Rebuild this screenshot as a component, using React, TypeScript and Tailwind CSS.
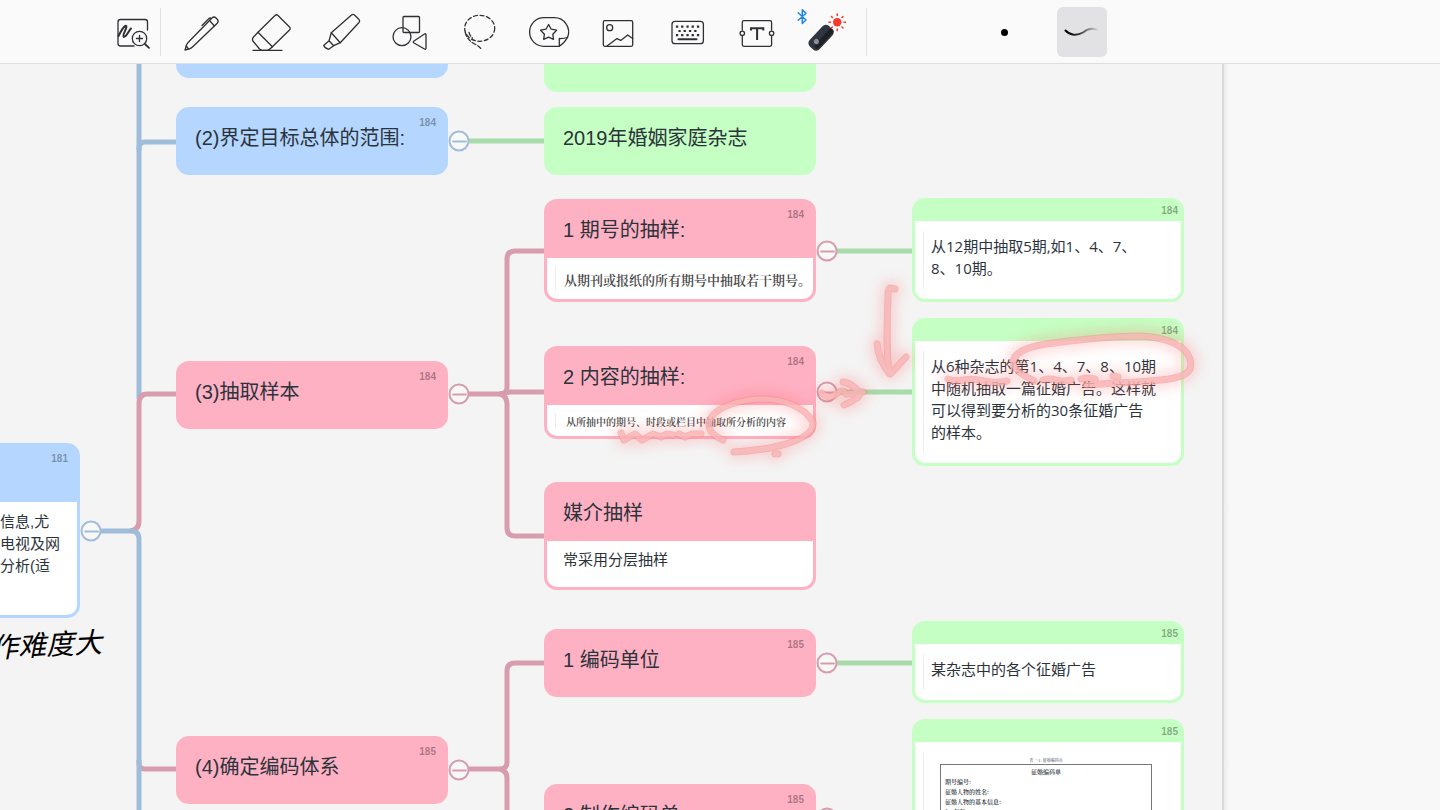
import { ReactNode } from 'react'
import { Minus } from 'lucide-react'
import clsx from 'clsx'

type Tone = 'blue' | 'pink' | 'green'

interface MapNode {
  x: number
  y: number
  w?: number
  h: number
  tone: Tone
  title?: string
  page?: number
  lines?: string[]
  kind?: 'plain' | 'quote' | 'scan' | 'form'
  scanSize?: string
  cut?: boolean
}

const TONES: { [key in Tone]: { card: string; line: string; text: string } } = {
  blue: { card: 'bg-[#b5d7ff] border-[#b5d7ff]', line: '#9fbcdb', text: 'text-[#9fbcdb] border-[#9fbcdb]' },
  pink: { card: 'bg-[#ffb1c4] border-[#ffb1c4]', line: '#d79cad', text: 'text-[#d79cad] border-[#d79cad]' },
  green: { card: 'bg-[#c5ffc3] border-[#c5ffc3]', line: '#a8dbaa', text: 'text-[#a8dbaa] border-[#a8dbaa]' }
}

// y is measured from the top of the board
const NODES: MapNode[] = [
  { x: 0, y: 379, w: 80, h: 175, tone: 'blue', title: '', page: 181, lines: ['信息,尤', '电视及网', '分析(适'], kind: 'plain', cut: true },
  { x: 176, y: -54, h: 68, tone: 'blue', title: '' },
  { x: 176, y: 43, h: 68, tone: 'blue', title: '(2)界定目标总体的范围:', page: 184 },
  { x: 176, y: 297, h: 68, tone: 'pink', title: '(3)抽取样本', page: 184 },
  { x: 176, y: 672, h: 68, tone: 'pink', title: '(4)确定编码体系', page: 185 },
  { x: 544, y: -40, h: 68, tone: 'green', title: '' },
  { x: 544, y: 43, h: 68, tone: 'green', title: '2019年婚姻家庭杂志' },
  { x: 544, y: 135, h: 103, tone: 'pink', title: '1 期号的抽样:', page: 184, lines: ['从期刊或报纸的所有期号中抽取若干期号。'], kind: 'scan', scanSize: 'text-[13px] pl-2 pt-[6px]' },
  { x: 544, y: 282, h: 93, tone: 'pink', title: '2 内容的抽样:', page: 184, lines: ['从所抽中的期号、时段或栏目中抽取所分析的内容'], kind: 'scan', scanSize: 'text-[10px] pl-[10px] pt-px' },
  { x: 544, y: 418, h: 108, tone: 'pink', title: '媒介抽样', lines: ['常采用分层抽样'], kind: 'plain' },
  { x: 544, y: 565, h: 68, tone: 'pink', title: '1 编码单位', page: 185 },
  { x: 544, y: 720, h: 68, tone: 'pink', title: '2 制作编码单', page: 185 },
  { x: 912, y: 134, h: 104, tone: 'green', page: 184, lines: ['从12期中抽取5期,如1、4、7、', '8、10期。'], kind: 'quote' },
  { x: 912, y: 254, h: 148, tone: 'green', page: 184, lines: ['从6种杂志的第1、4、7、8、10期', '中随机抽取一篇征婚广告。这样就', '可以得到要分析的30条征婚广告', '的样本。'], kind: 'quote' },
  { x: 912, y: 557, h: 82, tone: 'green', page: 185, lines: ['某杂志中的各个征婚广告'], kind: 'quote' },
  { x: 912, y: 655, h: 160, tone: 'green', page: 185, lines: ['期号编号:', '征婚人物的姓名:', '征婚人物的基本信息:', '1、年龄:'], kind: 'form' }
]

const TOGGLES: { x: number; y: number; tone: Tone }[] = [
  { x: 91, y: 467, tone: 'blue' },
  { x: 459, y: 77, tone: 'blue' },
  { x: 459, y: 330, tone: 'pink' },
  { x: 459, y: 706, tone: 'pink' },
  { x: 827, y: 187, tone: 'pink' },
  { x: 827, y: 328, tone: 'pink' },
  { x: 827, y: 599, tone: 'pink' },
  { x: 827, y: 754, tone: 'pink' }
]

const LINKS: { d: string; tone: Tone }[] = [
  { d: 'M139 696 V699 Q139 705 145 705 H176', tone: 'pink' },
  { d: 'M139 0 V335', tone: 'blue' },
  { d: 'M139 86 V84 Q139 78 145 78 H176', tone: 'blue' },
  { d: 'M130 467 Q139 466 139 457 V340 Q139 330 147 330 H176', tone: 'pink' },
  { d: 'M101 467 H131 Q139 467 139 475 V746', tone: 'blue' },
  { d: 'M469 77 H544', tone: 'green' },
  { d: 'M469 330 H500 Q507 330 507 323 V195 Q507 187 515 187 H544', tone: 'pink' },
  { d: 'M500 330 L510 328 H544', tone: 'pink' },
  { d: 'M500 330 Q507 332 507 340 V464 Q507 472 515 472 H544', tone: 'pink' },
  { d: 'M469 705 H500 Q507 705 507 698 V607 Q507 599 515 599 H544', tone: 'pink' },
  { d: 'M500 705 Q507 707 507 714 V760', tone: 'pink' },
  { d: 'M837 187 H912', tone: 'green' },
  { d: 'M837 328 H912', tone: 'green' },
  { d: 'M837 599 H912', tone: 'green' }
]

const LASER_STROKES = [
  'M895 225 L890 224 Q888 224 888 232 C887 260 886 285 889 309',
  'M877 280 C878 292 884 303 890 310 C895 306 900 299 906 293',
  'M1034 317 C1022 311 1012 304 1013 297 C1016 285 1036 281 1054 279 C1085 275 1120 272 1140 272 C1164 273 1185 280 1190 295 C1193 306 1188 311 1174 314 C1150 319 1115 318 1086 321',
  'M948 315 Q956 318 964 316 T984 317 T1007 317',
  'M1043 316 Q1050 314 1056 316 T1071 316',
  'M1081 315 Q1088 313 1095 315',
  'M1113 312 L1118 313',
  'M822 329 Q829 336 836 330 T846 330 L863 328',
  'M843 318 Q850 319 855 324 Q863 329 857 334 Q850 339 844 341',
  'M723 376 C712 371 708 366 709 359 C712 344 735 337 758 335 C785 334 805 344 813 358 C815 371 793 379 770 384 Q750 387 734 388',
  'M775 390 L778 390',
  'M621 369 L624 376 L635 370 L642 376 L653 370 L661 373 L667 370 L673 371',
  'M679 370 L685 373 L692 370 L701 370'
]

function Icon({ children, label }: { children: ReactNode; label: string }) {
  return (
    <button type="button" aria-label={label} className="h-12 w-12 shrink-0">
      <svg
        width="48"
        height="48"
        viewBox="0 0 48 48"
        fill="none"
        stroke="#303034"
        strokeWidth="1.3"
        strokeLinecap="round"
        strokeLinejoin="round"
        className="overflow-visible"
      >
        {children}
      </svg>
    </button>
  )
}

function Toolbar() {
  return (
    <header className="flex h-[65px] shrink-0 items-center border-b-2 border-[#dededf] bg-[#fafafa] pt-px pl-[109px]">
      <Icon label="Zoom writing">
        <path d="M38.5 22 V14 Q38.5 11.5 36 11.5 H11.5 Q9 11.5 9 14 V35.5 Q9 38 11.5 38 H25" />
        <path d="M9.5 28 C12.5 22 16 16.5 17.3 18 C18.5 20 12.5 27.5 14.8 29 C17.5 29 19.5 23 22 20.5" strokeWidth="2" />
        <circle cx="30.5" cy="30.5" r="7.2" />
        <path d="M36 36 L40 39.8" strokeWidth="1.8" />
        <path d="M27.5 30.5 H33.5 M30.5 27.5 V33.5" />
      </Icon>
      <div className="ml-[3px] h-12 w-px bg-[#e0e0e0]" />
      <div className="ml-[17px] flex w-[672px] shrink-0 justify-between">
        <Icon label="Pen">
          <path d="M7 42 L8.5 37 Q9.5 35 11 33.5 L34 10 Q36 8 38 10 L39.5 11.5 Q41 13.5 39 15.5 L15 38.5 Q13.5 40 11.5 40.8 Z" />
          <path d="M31.5 12.5 L36.5 18 M24 17.5 L31 10.5 Q32 9.5 33.2 10.6 M8.2 38 L10.5 41" />
        </Icon>
        <Icon label="Eraser">
          <path d="M11 24.3 L28 7.5 Q29.4 6 31 7.5 L42.5 19 Q44 20.5 42.5 22 L25.4 38.7 Z" />
          <path d="M11 24.3 L6.5 29 Q4.5 31.3 6.3 33.5 L12.5 41 Q14 42.3 15.5 42.3 H20 Q21.5 42.3 25.4 38.7" />
          <path d="M6 42.3 H35" />
        </Icon>
        <Icon label="Highlighter">
          <path d="M14.3 24.7 L34.5 7 Q36 5.7 37.5 7 L42 11.5 Q43.3 13 42 14.5 L23.3 34.7 Z" />
          <path d="M14.3 24.7 L12 32.7 L16.7 37.7 L23.3 34.7 M12 32.7 L6.7 37.5 Q8 40.5 11.7 41.3 L16.7 37.7" />
        </Icon>
        <Icon label="Shapes">
          <rect x="17" y="8.5" width="16.5" height="16" rx="1" />
          <circle cx="16" cy="28.7" r="9" />
          <path d="M28 33 L38.5 26 Q40 25.2 40 27 V40 Q40 42 38.5 41 L28 35 Q26.5 34 28 33 Z" />
        </Icon>
        <Icon label="Lasso">
          <ellipse cx="24.7" cy="20.3" rx="15" ry="13" strokeDasharray="4 2.6" />
          <path d="M10.3 24.5 Q12 32 19.7 36 Q24 38 26.4 41.3 M14 24.3 Q15 28 17.5 30" strokeDasharray="4 2.2" />
        </Icon>
        <Icon label="Sticker">
          <path d="M34.3 38.3 H18.9 A14.3 14.3 0 0 1 18.9 9.7 H28.7 A14.3 14.3 0 0 1 42.5 29.5 Q39 35.5 34.3 38.3 Z" />
          <path d="M34.3 38.3 V30.5 Q38 30.8 42.5 29.5" />
          <path d="M23.6 16.5 L26.2 21.2 L31.6 22.2 L27.8 26.2 L28.5 31.4 L23.6 29.2 L18.7 31.4 L19.4 26.2 L15.6 22.2 L21 21.2 Z" />
        </Icon>
        <Icon label="Image">
          <rect x="9.3" y="12.7" width="29.4" height="25.6" rx="1.5" />
          <circle cx="15.7" cy="19.7" r="3" />
          <path d="M13 38 L23 30.6 L26.7 32.4 L33.7 27 L38.7 30.5" />
        </Icon>
        <Icon label="Keyboard">
          <rect x="9" y="13.3" width="31.4" height="22.4" rx="3" />
          <path
            d="M14 18.7 h.1 M19.2 18.7 h.1 M24.5 18.7 h.1 M29.7 18.7 h.1 M35 18.7 h.1 M16.5 23 h.1 M21.7 23 h.1 M27 23 h.1 M32.3 23 h.1 M14 27.2 h.1 M19.2 27.2 h.1 M24.5 27.2 h.1 M29.7 27.2 h.1 M35 27.2 h.1"
            strokeWidth="2.2"
            strokeLinecap="square"
          />
          <path d="M15.5 31.2 H33.5" strokeWidth="2" />
        </Icon>
        <Icon label="Text">
          <path d="M9.3 22 V14.5 Q9.3 12.7 11 12.7 H37 Q38.6 12.7 38.6 14.5 V22 M9.3 28.5 V36.5 Q9.3 38.3 11 38.3 H37 Q38.6 38.3 38.6 36.5 V28.5" />
          <circle cx="9.3" cy="25.3" r="2.2" />
          <circle cx="38.6" cy="25.3" r="2.2" />
          <path d="M18 22.5 V20.3 H30.3 V22.5 M24.1 20.3 V32" strokeWidth="2" strokeLinecap="butt" strokeLinejoin="miter" />
        </Icon>
        <Icon label="Laser pointer">
          <path d="M-3.8 4.8 L4 12 L0.3 15.5 V1.8 L4 5.2 L-3.8 12.2" stroke="#1e88e5" strokeWidth="1.5" />
          <g transform="rotate(-47 19 29.7)" stroke="none">
            <rect x="5" y="23" width="28" height="13.5" rx="4.5" fill="#30363f" />
            <rect x="8" y="30" width="25" height="5" rx="2" fill="#1d2127" />
            <circle cx="13" cy="29" r="2.6" fill="#8b8f94" />
          </g>
          <circle cx="35.2" cy="14.3" r="4.2" fill="#f8382c" stroke="none" />
          <path
            d="M35.2 6 v1.5 M35.2 21 v1.5 M27 14.3 h1.5 M42 14.3 h1.5 M29.4 8.5 l1 1 M40 19 l1 1 M29.4 20 l1 -1 M40 9.5 l1 -1"
            stroke="#f8382c"
            strokeWidth="1.5"
          />
        </Icon>
      </div>
      <div className="ml-4 h-12 w-px bg-[#e0e0e0]" />
      <button type="button" aria-label="Point size" className="ml-[113px] flex h-12 w-12 items-center justify-center">
        <span className="h-[7px] w-[7px] rounded-full bg-black" />
      </button>
      <button type="button" aria-label="Laser trail" className="ml-[29px] flex h-[50px] w-[50px] items-center justify-center rounded-md bg-[#e2e2e4]">
        <svg width="36" height="14" viewBox="0 0 36 14" fill="none">
          <defs>
            <linearGradient id="trail" x1="0" x2="1" y1="0" y2="0">
              <stop offset="0" stopColor="#000" />
              <stop offset="0.4" stopColor="#333" />
              <stop offset="1" stopColor="#333" stopOpacity="0" />
            </linearGradient>
          </defs>
          <path d="M1.5 5.5 C6 10.5 13 11 19 7.5 C24 3.5 29 2.5 35 5.5" stroke="url(#trail)" strokeWidth="2" strokeLinecap="round" />
        </svg>
      </button>
    </header>
  )
}

function NodeBody({ node }: { node: MapNode }) {
  const lines = node.lines || []

  switch (node.kind) {
    case 'quote':
      return (
        <div className="flex-1 rounded-b-[10px] bg-white py-[10px] pl-2">
          <blockquote className="h-full border-l border-[#ececec] pt-1 pl-[7px] font-['Open_Sans','Noto_Sans_CJK_SC',sans-serif] text-[15px] leading-[22px] whitespace-nowrap">
            {lines.map((line) => <p key={line}>{line}</p>)}
          </blockquote>
        </div>
      )
    case 'scan':
      return (
        <div className="min-h-0 flex-1 rounded-b-[10px] bg-white py-2 pl-2">
          <p className={clsx('h-full border-l border-[#ececec] font-["Noto_Serif_CJK_SC","Noto_Sans_CJK_SC",serif] leading-4 font-semibold whitespace-nowrap text-[#444]', node.scanSize)}>
            {lines.join('')}
          </p>
        </div>
      )
    case 'form':
      return (
        <div className="flex-1 bg-white pt-[10px] pl-2">
          <div className="h-full border-l border-[#ececec] pr-[29px] pl-4 font-['Noto_Serif_CJK_SC','Noto_Sans_CJK_SC',serif] text-[6px] leading-[10px] font-semibold">
            <p className="pt-1 text-center text-[4px] leading-[8px] text-gray-500">表一-1. 征婚编码单</p>
            <div className="h-full border border-[#777] px-1">
              <p className="pt-[2px] text-center">征婚编码单</p>
              {lines.map((line) => <p key={line}>{line}</p>)}
            </div>
          </div>
        </div>
      )
    default:
      return (
        <div className={clsx('flex-1 bg-white text-[15px] leading-[22px] whitespace-nowrap', node.cut ? 'rounded-br-[10px] pt-[9px]' : 'rounded-b-[10px] px-4 pt-2')}>
          {lines.map((line) => <p key={line}>{line}</p>)}
        </div>
      )
  }
}

function NodeCard({ node }: { node: MapNode }) {
  const hasTitle = node.title !== undefined
  return (
    <article
      className={clsx(
        'absolute flex flex-col border-[3px] text-[#2b333b]',
        node.cut ? 'rounded-r-[13px] border-l-0' : 'rounded-[13px]',
        TONES[node.tone].card
      )}
      style={{ left: node.x, top: node.y, width: node.w || 272, height: node.h }}
    >
      <div className={hasTitle ? 'h-14 shrink-0 px-4 pt-[14px]' : 'h-5 shrink-0'}>
        {hasTitle && <h2 className="text-[20px] leading-7 whitespace-nowrap">{node.title}</h2>}
      </div>
      {node.page && (
        <span className={clsx('absolute text-[10px] leading-3 font-bold text-black/35', hasTitle ? 'top-[7px] right-[9px]' : 'top-1 right-[3px]')}>
          {node.page}
        </span>
      )}
      {node.lines && <NodeBody node={node} />}
    </article>
  )
}

function LaserInk() {
  return (
    <svg className="pointer-events-none absolute top-0 left-0" width="1222" height="746" fill="none" strokeLinecap="round" strokeLinejoin="round">
      <defs>
        <filter id="glow" x="-20%" y="-20%" width="140%" height="140%">
          <feGaussianBlur stdDeviation="7" />
        </filter>
      </defs>
      <g stroke="#ff5a5a" strokeWidth="14" opacity="0.25" filter="url(#glow)">
        {LASER_STROKES.map((d) => <path key={d} d={d} />)}
      </g>
      <g stroke="#f08c8e" strokeWidth="7" opacity="0.5">
        {LASER_STROKES.map((d) => <path key={d} d={d} />)}
      </g>
      <g stroke="#fcc0c0" strokeWidth="5" opacity="0.65">
        {LASER_STROKES.map((d) => <path key={d} d={d} />)}
      </g>
    </svg>
  )
}

export default function App() {
  return (
    <div className="flex h-screen flex-col overflow-hidden bg-[#f8f8f8] font-['Liberation_Sans','Noto_Sans_CJK_SC',sans-serif]">
      <Toolbar />
      <div className="-mt-px flex min-h-0 flex-1">
        <main className="relative flex-1 overflow-hidden bg-[#f4f4f4]">
          <svg className="absolute top-0 left-0" width="1222" height="746" fill="none" strokeWidth="5">
            {LINKS.map((link) => <path key={link.d} d={link.d} stroke={TONES[link.tone].line} />)}
          </svg>
          {NODES.map((node, i) => <NodeCard key={i} node={node} />)}
          {TOGGLES.map((toggle, i) => (
            <button
              type="button"
              aria-label="Collapse branch"
              key={i}
              className={clsx('absolute flex h-[21px] w-[21px] -translate-x-1/2 -translate-y-1/2 items-center justify-center rounded-full border-2 bg-[#f8f8f8]', TONES[toggle.tone].text)}
              style={{ left: toggle.x, top: toggle.y }}
            >
              <Minus size={22} strokeWidth={2} className="shrink-0" />
            </button>
          ))}
          <p className="absolute top-[566px] -left-[10px] -rotate-3 text-[28px] leading-8 text-black italic">作难度大</p>
          <LaserInk />
        </main>
        <aside className="w-[218px] shrink-0 border-l-2 border-[#d9d9d9] bg-linear-to-r from-[#ececec] to-[#f8f8f8] to-[6px]" />
      </div>
    </div>
  )
}
